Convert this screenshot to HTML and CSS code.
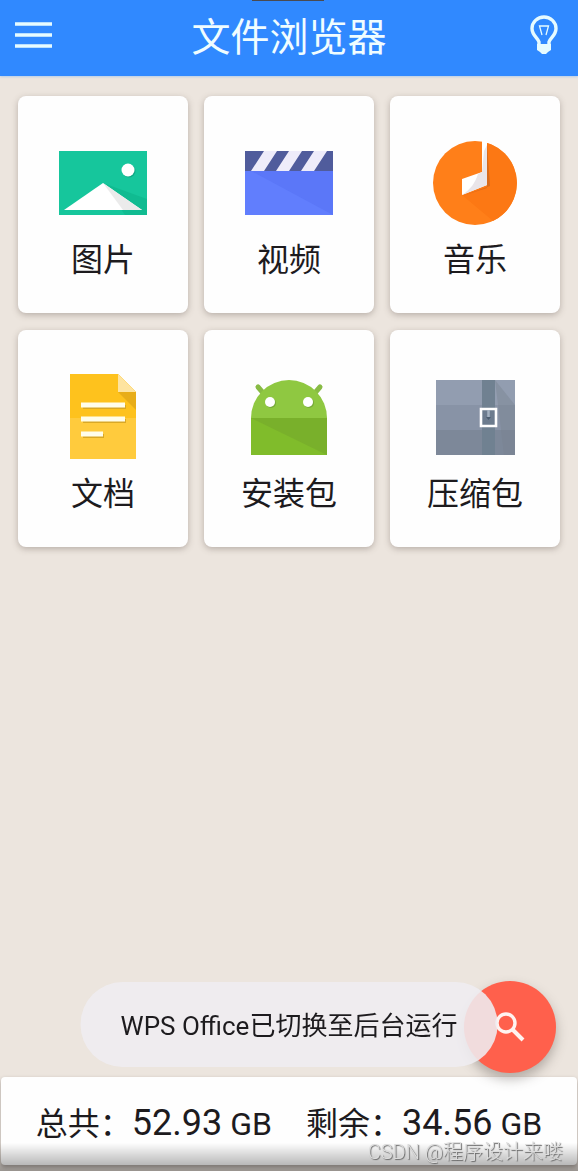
FILE: index.html
```html
<!DOCTYPE html>
<html lang="zh-CN">
<head>
  <meta charset="UTF-8">
  <meta name="viewport" content="width=device-width, initial-scale=1.0">
  <title>文件浏览器</title>
  <link rel="stylesheet" href="styles.css">
</head>
<body>

  <div class="notch"></div>

  <header class="topbar">
    <button class="icon-btn" aria-label="菜单">
      <svg width="38" height="26" viewBox="0 0 38 26">
        <path d="M0 2h37M0 13h37M0 24h37" stroke="#e6fbff" stroke-width="3.4"/>
      </svg>
    </button>
    <h1>文件浏览器</h1>
    <button class="icon-btn" aria-label="提示">
      <svg width="28" height="40" viewBox="0 0 28 40" fill="none" stroke="#e6fbff">
        <path d="M9 30v-3C8 23 2 20.500 2 13.500a12 11.500 0 0 1 24 0C26 20.500 20 23 19 27v3" stroke-width="3.400"/>
        <path d="M7 29h14v6l-3 2-2 2h-4l-2-2-3-2z" fill="#e6fbff" stroke="none"/>
        <path d="M12 20L9.500 11h9L16 20" stroke-width="1.300"/>
      </svg>
    </button>
  </header>

  <main class="grid">
    <button class="card">
      <svg class="icon" viewBox="0 0 88 88">
        <path d="M0 12h88v64H0z" fill="#16c69c"/>
        <path d="M44 44L88 60v16H66z" fill="#10bb91"/>
        <path d="M5 71l39-27 39 27z" fill="#fff"/>
        <path d="M44 44l39 27H64z" fill="#ebebeb"/>
        <circle cx="70" cy="32" r="6.500" fill="#0fa884"/>
        <circle cx="69" cy="31" r="6.500" fill="#fff"/>
      </svg>
      <span>图片</span>
    </button>
    <button class="card">
      <svg class="icon" viewBox="0 0 88 88">
        <path d="M0 12h88v64H0z" fill="#617efd"/>
        <path d="M6 32h82v44z" fill="#5b77f8"/>
        <path d="M0 12h88v20H0z" fill="#505c9c"/>
        <path d="M19 12h13L19 32H6zM44 12h13L44 32H31zM69 12h13L69 32H56z" fill="#eeecfa"/>
      </svg>
      <span>视频</span>
    </button>
    <button class="card">
      <svg class="icon" viewBox="0 0 88 88">
        <circle cx="44" cy="44" r="42" fill="#ff7f19"/>
        <path d="M56 4A42 42 0 0 1 62 82L31 56l25-10z" fill="#fc7814"/>
        <path d="M56 4l3 43-28 10 25-8z" fill="#d76a1c"/>
        <path d="M51 1l5 2v43l-25 10V40l20-7z" fill="#fff"/>
        <path d="M53 12l3-6v40l-25 10c9-6 13-12 16-21l4-2z" fill="#e9e5e9"/>
      </svg>
      <span>音乐</span>
    </button>
    <button class="card">
      <svg class="icon" viewBox="0 0 88 88">
        <path d="M11 1h48l18 18v67H11z" fill="#ffcb3d"/>
        <path d="M11 1h48l18 18v26H11z" fill="#fec21d"/>
        <path d="M59 19h18v18z" fill="#e8ad18"/>
        <path d="M59 1l18 18H59z" fill="#fee4a0"/>
        <path d="M24 34h43M24 48h43M24 63h21" stroke="#d9a827" stroke-width="4"/>
        <path d="M22 32h44M22 46h44M22 61h22" stroke="#fffdea" stroke-width="5"/>
      </svg>
      <span>文档</span>
    </button>
    <button class="card">
      <svg class="icon" viewBox="0 0 88 88">
        <path d="M13 14l6 7M75 14l-6 7" stroke="#88bb44" stroke-width="5" stroke-linecap="round"/>
        <path d="M6 45a38 38 0 0 1 76 0z" fill="#8fc841"/>
        <path d="M6 45h76v37H6z" fill="#80bc2b"/>
        <path d="M6 45h76v37z" fill="#79b02b"/>
        <circle cx="26" cy="30" r="5" fill="#76a93a"/>
        <circle cx="64" cy="30" r="5" fill="#76a93a"/>
        <circle cx="25" cy="29" r="5" fill="#fff"/>
        <circle cx="63" cy="29" r="5" fill="#fff"/>
      </svg>
      <span>安装包</span>
    </button>
    <button class="card">
      <svg class="icon" viewBox="0 0 88 88">
        <path d="M5 7h79v26H5z" fill="#929db0"/>
        <path d="M5 32h79v26H5z" fill="#8893a6"/>
        <path d="M5 57h79v25H5z" fill="#7d8899"/>
        <path d="M64 7l20 25v50H73z" fill="#79838f" opacity=".4"/>
        <path d="M51 7h13v75H51z" fill="#708191"/>
        <path d="M50 36h15v17H50z" fill="#6d7c8e" stroke="#fff" stroke-width="2.600"/>
        <path d="M57.500 37v7" stroke="#a5b2c0" stroke-width="2.500"/>
        <path d="M55 44h5l-2.500 3z" fill="#4c5d6f"/>
      </svg>
      <span>压缩包</span>
    </button>
  </main>

  <button class="fab" aria-label="搜索">
    <svg width="32" height="32" viewBox="0 0 32 32" fill="none" stroke="#fff3f0">
      <circle cx="12" cy="12" r="9" stroke-width="3.400"/>
      <path d="M18 18l11 11" stroke-width="4"/>
    </svg>
  </button>

  <div class="toast" role="status">WPS Office已切换至后台运行</div>

  <footer class="storage">
    <div class="stat">总共：<span class="num">52.93</span><span class="unit">GB</span></div>
    <div class="stat">剩余：<span class="num">34.56</span><span class="unit">GB</span></div>
  </footer>

  <div class="shade"></div>
  <div class="watermark">CSDN @程序设计来喽</div>

</body>
</html>
```
FILE: styles.css
```css
* { box-sizing: border-box; }
body {
  margin: 0;
  min-height: 100vh;
  display: flex;
  flex-direction: column;
  background-color: #ece5de;
  color: #1d1b1e;
  font-family: Roboto, "Noto Sans CJK SC", sans-serif;
}
button {
  border: none;
  padding: 0;
  color: inherit;
  font-family: inherit;
  cursor: pointer;
}
svg { display: block; }

.notch {
  position: absolute;
  top: 0;
  left: 50%;
  width: 72px;
  height: 1px;
  margin-left: -37px;
  background-color: #4a4a4f;
}

/* header */
.topbar {
  display: flex;
  align-items: center;
  justify-content: space-between;
  height: 76px;
  padding: 0 15px;
  background-color: #3089ff;
  box-shadow: 0 1px 2px #b5cdea;
}
.topbar h1 {
  margin: 0;
  color: #f0fdff;
  font-size: 39px;
  font-weight: 400;
  line-height: 48px;
}
.icon-btn {
  display: flex;
  justify-content: center;
  width: 38px;
  padding-bottom: 7px;
  background: none;
}

/* categories */
.grid {
  display: grid;
  grid-template-columns: repeat(3, 1fr);
  gap: 17px 16px;
  padding: 20px 18px;
}
.card {
  display: flex;
  flex-direction: column;
  align-items: center;
  gap: 13px;
  padding: 43px 0 33px;
  border-radius: 8px;
  background-color: #fefefe;
  box-shadow: 0 2px 6px rgba(90, 75, 70, 0.35);
  font-size: 32px;
  line-height: 40px;
}
.icon { width: 88px; height: 88px; }

/* floating items */
.fab {
  position: fixed;
  right: 22px;
  bottom: 98px;
  width: 92px;
  height: 92px;
  display: flex;
  align-items: center;
  justify-content: center;
  border-radius: 50%;
  background-color: #ff604c;
  box-shadow: 0 6px 12px rgba(70, 60, 55, 0.35);
}
.toast {
  position: fixed;
  left: 50%;
  bottom: 104px;
  transform: translateX(-50%);
  padding: 24px 40px 21px;
  border-radius: 42px;
  background-color: rgba(239, 237, 241, 0.88);
  font-size: 26px;
  line-height: 40px;
  white-space: nowrap;
}

/* storage */
.storage {
  display: flex;
  justify-content: center;
  gap: 34px;
  margin: auto 1px 6px;
  padding: 24px 0 19px;
  border-radius: 4px;
  background-color: #fefefe;
  box-shadow: 0 2px 4px rgba(60, 50, 50, 0.4);
}
.stat {
  display: flex;
  align-items: baseline;
  font-size: 32px;
  line-height: 44px;
  white-space: nowrap;
}
.num { font-size: 36px; }
.unit { margin-left: 8px; }

.shade {
  position: fixed;
  left: 0;
  right: 0;
  bottom: 0;
  height: 28px;
  background: linear-gradient(rgba(0, 0, 0, 0), rgba(0, 0, 0, 0.35));
  pointer-events: none;
}
.watermark {
  position: fixed;
  right: 15px;
  bottom: 5px;
  color: #dcdcdc;
  font-size: 20px;
  font-weight: 300;
  line-height: 28px;
  text-shadow: 1px 1px 1px #666;
}
```
